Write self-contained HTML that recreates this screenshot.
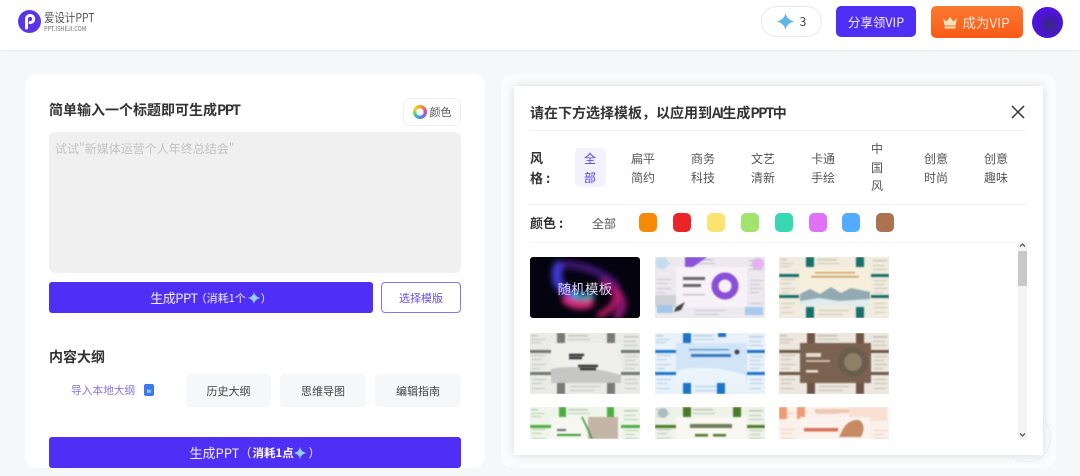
<!DOCTYPE html>
<html lang="zh"><head><meta charset="utf-8"><style>
*{box-sizing:border-box;margin:0;padding:0}
html,body{width:1080px;height:476px;overflow:hidden;background:#f5f7f9;font-family:"Noto Sans CJK SC","Liberation Sans",sans-serif;color:#333}
.a{position:absolute;white-space:nowrap}
.c{display:flex;align-items:center;justify-content:center}
.t{position:absolute;overflow:hidden;width:110px;height:61px}
.t svg{display:block;filter:blur(.7px)}
.t use{opacity:.6}
.sw{position:absolute;top:213px;width:18px;height:19px;border-radius:5px}
.st{position:absolute;font-size:12px;line-height:19px;color:#555;text-align:left;width:24px;white-space:normal}
.g{top:374px;height:33px;background:#f5f7f9;border-radius:5px;font-size:11px;color:#444}
.n{letter-spacing:-1.600px}
</style></head><body>
<svg width="0" height="0" style="position:absolute"><defs>
<g id="d"><rect x="1" y="2" width="7" height="1.500"/><rect x="1" y="6" width="14" height="1"/><rect x="1" y="9" width="10" height="1"/><rect x="38" y="2" width="20" height="1.500"/><rect x="38" y="6" width="22" height="1"/><rect x="94" y="3" width="14" height="1.500"/><rect x="94" y="8" width="12" height="1"/><rect x="94" y="12" width="14" height="1"/><rect x="2" y="22" width="14" height="1"/><rect x="2" y="26" width="10" height="1"/><rect x="2" y="31" width="14" height="1"/><rect x="2" y="35" width="8" height="1"/><rect x="95" y="23" width="13" height="1"/><rect x="95" y="27" width="10" height="1"/><rect x="95" y="31" width="13" height="1"/><rect x="95" y="35" width="9" height="1"/><rect x="2" y="46" width="14" height="1"/><rect x="2" y="50" width="10" height="1"/><rect x="2" y="55" width="13" height="1"/><rect x="40" y="53" width="30" height="1"/><rect x="40" y="57" width="24" height="1"/><rect x="95" y="46" width="12" height="1"/><rect x="95" y="50" width="13" height="1"/><rect x="95" y="55" width="11" height="1"/></g>
</defs></svg>
<div class="a" style="left:0;top:0;width:1080px;height:50px;background:#fff;box-shadow:0 1px 3px #e9ebef"></div>
<svg class="a" style="left:18px;top:10px" width="23" height="23" viewBox="0 0 23 23"><circle cx="11.500" cy="11.500" r="11.500" fill="#5b34ea"/><path d="M8.500 18V9a3.600 3.600 0 1 1 3.600 3.600" fill="none" stroke="#fff" stroke-width="3" stroke-linecap="round"/></svg>
<div class="a" style="left:44px;top:11px;font-size:12px;line-height:14px;color:#555;transform-origin:0 0;transform:scaleX(.87)">爱设计PPT</div>
<div class="a" style="left:44px;top:24px;font-size:6.500px;line-height:9px;color:#888;font-weight:500;transform-origin:0 0;transform:scaleX(.85)">PPT.ISHEJI.COM</div>

<div class="a c" style="left:761px;top:6px;width:61px;height:31px;border:1px solid #e8e8ee;border-radius:16px;font-size:12px;color:#444;background:#fff"><svg width="17" height="17" viewBox="0 0 16 16" style="margin-right:6px"><path d="M8 0Q9 6 16 8Q9 10 8 16Q7 10 0 8Q7 6 8 0Z" fill="#62b5e8"/></svg>3</div>
<div class="a c" style="left:836px;top:6px;width:80px;height:31px;background:#4f2ff5;border-radius:5px;color:#f2efff;font-size:12.500px">分享领VIP</div>
<div class="a c" style="left:931px;top:6px;width:92px;height:32px;background:linear-gradient(#fb7a32,#fb5a14);border-radius:5px;color:#ffe9dc;font-size:13.500px"><svg width="16" height="13" viewBox="0 0 16 13" style="margin-right:4px;margin-left:-2px"><path d="M1 2L4.500 5.500L8 1L11.500 5.500L15 2L13.500 9.500H2.500Z M2.500 10.500H13.500V12.500H2.500Z" fill="#ffe2b8"/></svg>成为VIP</div>
<svg class="a" style="left:1032px;top:7px" width="31" height="31" viewBox="0 0 31 31"><defs><radialGradient id="av" cx=".58" cy=".58" r=".5"><stop offset="0" stop-color="#3d2a70"/><stop offset=".4" stop-color="#3f1cb0"/><stop offset="1" stop-color="#5212e0"/></radialGradient></defs><circle cx="15.500" cy="15.500" r="15.500" fill="url(#av)"/></svg>

<!-- left card -->
<div class="a" style="left:25px;top:74px;width:460px;height:394px;background:#fff;border-radius:12px"></div>
<div class="a" style="left:49px;top:100px;font-size:14px;line-height:20px;font-weight:700;color:#333">简单输入一个标题即可生成<span class="n">PPT</span></div>
<div class="a c" style="left:403px;top:98px;width:58px;height:28px;border:1px solid #f0f0f3;border-radius:7px;font-size:11px;color:#555"><span style="width:14px;height:14px;border-radius:50%;margin-right:3px;background:radial-gradient(circle,#fff 0 36%,transparent 38%),conic-gradient(#f5a623,#f2557a,#9a55e8,#4a90e8,#3ccf90,#f5d623,#f5a623)"></span>颜色</div>
<div class="a" style="left:49px;top:132px;width:412px;height:141px;background:#f0f0f0;border-radius:6px"></div>
<div class="a" style="left:55px;top:140px;font-size:12px;line-height:17px;color:#c4c4c4">试试"新媒体运营个人年终总结会"</div>
<div class="a c" style="left:49px;top:282px;width:324px;height:31px;background:#4f2ff5;border-radius:3px;color:#f2efff;font-size:11px"><span style="font-size:13px;letter-spacing:-.5px">生成PPT</span><span style="margin-left:-2px">（消耗1个</span><svg width="12" height="12" viewBox="0 0 16 16" style="margin:0 1px 0 2px"><path d="M8 0Q9 6 16 8Q9 10 8 16Q7 10 0 8Q7 6 8 0Z" fill="#8fd0f5"/></svg>）</div>
<div class="a c" style="left:381px;top:282px;width:80px;height:31px;border:1px solid #8a76ea;border-radius:4px;color:#6a50e0;font-size:11px">选择模版</div>
<div class="a" style="left:49px;top:347px;font-size:14px;line-height:20px;font-weight:700;color:#333">内容大纲</div>
<div class="a" style="left:71px;top:383px;font-size:10.700px;line-height:16px;color:#8a72e6">导入本地大纲</div>
<div class="a c" style="left:144px;top:384px;width:10px;height:12px;background:#3a78f0;border-radius:2px;color:#fff;font-size:6px">w</div>
<div class="a c g" style="left:186px;width:85px">历史大纲</div>
<div class="a c g" style="left:280px;width:86px">思维导图</div>
<div class="a c g" style="left:375px;width:86px">编辑指南</div>
<div class="a c" style="left:49px;top:437px;width:412px;height:31px;background:#4f2ff5;border-radius:3px;color:#f2efff;font-size:12px"><span style="font-size:13px">生成PPT</span>（<b style="font-size:11.500px;color:#fff;margin-left:1px">消耗1点</b><svg width="12" height="12" viewBox="0 0 16 16"><path d="M8 0Q9 6 16 8Q9 10 8 16Q7 10 0 8Q7 6 8 0Z" fill="#8fd0f5"/></svg>&nbsp;）</div>

<!-- right -->
<div class="a" style="left:501px;top:74px;width:555px;height:394px;background:#fbfcfd;border-radius:12px"></div>
<div class="a" style="left:1003px;top:414px;width:48px;height:48px;border:1px solid #f0f1f3;border-radius:50%"></div>
<div class="a" style="left:514px;top:86px;width:529px;height:369px;background:#fff;box-shadow:0 0 10px rgba(0,0,0,.14)"></div>
<div class="a" style="left:530px;top:103px;font-size:14px;line-height:20px;font-weight:700;color:#333">请在下方选择模板，以应用到<span class="n">AI</span>生成<span class="n">PPT</span>中</div>
<svg class="a" style="left:1011px;top:105px" width="14" height="14" viewBox="0 0 14 14"><path d="M1 1L13 13M13 1L1 13" stroke="#333" stroke-width="1.500"/></svg>
<div class="a" style="left:530px;top:130px;width:497px;height:1px;background:#f1f1f3"></div>
<div class="a" style="left:530px;top:148px;width:28px;font-size:13px;line-height:20px;font-weight:700;white-space:normal;color:#333">风<br>格 :</div>
<div class="a" style="left:575px;top:148px;width:31px;height:39px;background:#f4f1fe;border-radius:5px"></div>
<div class="st" style="left:584px;top:148.500px;width:12px;color:#5a3ae6">全部</div>
<div class="st" style="left:631px;top:148.500px">扁平简约</div>
<div class="st" style="left:691px;top:148.500px">商务科技</div>
<div class="st" style="left:751px;top:148.500px">文艺清新</div>
<div class="st" style="left:811px;top:148.500px">卡通手绘</div>
<div class="st" style="left:871px;top:140px;width:12px;line-height:18.500px">中国风</div>
<div class="st" style="left:924px;top:148.500px">创意时尚</div>
<div class="st" style="left:984px;top:148.500px">创意趣味</div>
<div class="a" style="left:530px;top:204px;width:497px;height:1px;background:#f1f1f3"></div>
<div class="a" style="left:530px;top:213px;font-size:13px;line-height:20px;font-weight:700;color:#333">颜色 :</div>
<div class="a" style="left:592px;top:214px;font-size:12px;line-height:19px;color:#555">全部</div>
<div class="sw" style="left:639px;background:#f58a07"></div>
<div class="sw" style="left:673px;background:#e92528"></div>
<div class="sw" style="left:707px;background:#fce26f"></div>
<div class="sw" style="left:741px;background:#a2e36e"></div>
<div class="sw" style="left:775px;background:#38d8b2"></div>
<div class="sw" style="left:809px;background:#e070f5"></div>
<div class="sw" style="left:842px;background:#52abfd"></div>
<div class="sw" style="left:876px;background:#ad7350"></div>
<div class="a" style="left:530px;top:242px;width:497px;height:1px;background:#f6f6f7"></div>

<!-- scrollbar -->
<div class="a" style="left:1018px;top:241px;width:9px;height:199px;background:#f3f3f3"></div>
<div class="a" style="left:1018px;top:251px;width:9px;height:35px;background:#c8c8c8"></div>
<svg class="a" style="left:1019px;top:242px" width="7" height="6" viewBox="0 0 7 6"><path d="M1 4.500L3.500 2L6 4.500" fill="none" stroke="#555" stroke-width="1.300"/></svg>
<svg class="a" style="left:1019px;top:432px" width="7" height="6" viewBox="0 0 7 6"><path d="M1 1.500L3.500 4L6 1.500" fill="none" stroke="#555" stroke-width="1.300"/></svg>

<!-- thumbs -->
<div class="t" style="left:530px;top:257px;border-radius:3px;background:#05030f">
<svg width="110" height="61" viewBox="0 0 110 61" style="filter:none"><defs><filter id="b1" x="-20%" y="-20%" width="140%" height="140%"><feGaussianBlur stdDeviation="3"/></filter></defs><g filter="url(#b1)" fill="none" stroke-linecap="round"><path d="M28 8C44 6 70 12 86 28" stroke="#3a1470" stroke-width="8"/><path d="M28 10C24 24 30 34 46 38" stroke="#3f38d8" stroke-width="10"/><path d="M36 43C44 49 54 49 60 46" stroke="#e02a7c" stroke-width="8"/><path d="M44 38C50 41 56 41 62 38" stroke="#18b8d8" stroke-width="5"/><path d="M74 26C92 36 96 46 88 58" stroke="#8a1470" stroke-width="9"/><path d="M70 58C82 52 88 44 86 34" stroke="#c01a6a" stroke-width="6"/></g></svg>
<div class="a c" style="left:0;top:0;width:110px;height:61px;color:#e4d8ee;font-size:13.500px;letter-spacing:.2px">随机模板</div></div>

<div class="t" style="left:655px;top:257px;background:#ece9ef">
<svg width="110" height="61" viewBox="0 0 110 61"><use href="#d" fill="#a9a9b8"/><circle cx="7" cy="6" r="6" fill="#c4dcf2"/><path d="M30 0H52L38 10H30Z" fill="#8a55d8"/><circle cx="103" cy="7" r="6" fill="#e4b4f0"/><rect x="0" y="38" width="22" height="12" fill="#d0d0d8"/><rect x="2" y="48" width="16" height="8" fill="#a4c6ea"/><rect x="90" y="50" width="18" height="8" fill="#a8c8ee"/><rect x="21" y="10" width="71" height="40" fill="#f6f2f7"/><circle cx="70" cy="29" r="10" fill="none" stroke="#8a4ed8" stroke-width="7"/><rect x="28" y="20" width="22" height="3" fill="#666"/><rect x="28" y="27" width="18" height="3" fill="#666"/><rect x="28" y="37" width="22" height="1.500" fill="#c4c4c4"/><path d="M21 50l9-5-4 8-7 2z" fill="#444"/></svg></div>

<div class="t" style="left:779px;top:257px;background:#f1ecdf">
<svg width="110" height="61" viewBox="0 0 110 61"><use href="#d" fill="#b5b09a"/><rect x="27" width="8" height="10" fill="#17706a"/><rect x="77" width="8" height="10" fill="#17706a"/><rect x="27" y="50" width="8" height="11" fill="#17706a"/><rect x="77" y="50" width="8" height="11" fill="#17706a"/><rect y="17" width="110" height="3" fill="#17706a"/><rect y="38" width="110" height="3" fill="#17706a"/><rect x="20" y="10" width="72" height="39" fill="#f6efdc"/><rect x="36" y="15" width="40" height="1.500" fill="#d0a060"/><rect x="32" y="19" width="48" height="1.500" fill="#c89858"/><path d="M21 37L31 32L41 37L52 30L62 36L72 31L91 35V49H21Z" fill="#93aab2"/><path d="M21 44L40 41L60 44L91 42V49H21Z" fill="#e0ecee"/></svg></div>

<div class="t" style="left:530px;top:333px;background:#eaeae6">
<svg width="110" height="61" viewBox="0 0 110 61"><use href="#d" fill="#a8a8a2"/><rect x="27" width="8" height="10" fill="#767b74"/><rect x="77" width="8" height="10" fill="#767b74"/><rect x="27" y="50" width="8" height="11" fill="#767b74"/><rect x="77" y="50" width="8" height="11" fill="#767b74"/><rect y="17" width="110" height="3" fill="#6e756d"/><rect y="39" width="110" height="3" fill="#6e756d"/><rect x="21" y="10" width="70" height="40" fill="#efefec"/><path d="M21 36Q50 30 91 42V50H21Z" fill="#c6c6c4"/><path d="M39 22h15M39 25h13M48 33h20M50 36h16" stroke="#333" stroke-width="2.400"/></svg></div>

<div class="t" style="left:655px;top:333px;background:#e9f2fa">
<svg width="110" height="61" viewBox="0 0 110 61"><use href="#d" fill="#8ab4d8"/><rect x="28" width="8" height="10" fill="#1b74c8"/><rect x="28" y="50" width="8" height="11" fill="#1b74c8"/><rect x="62" y="50" width="8" height="11" fill="#1b74c8"/><rect x="63" y="0" width="8" height="4" fill="#1b74c8"/><rect y="17" width="110" height="3" fill="#1b74c8"/><rect y="39" width="110" height="3" fill="#1b74c8"/><rect x="21" y="10" width="71" height="40" fill="#d2e5f6"/><rect x="34" y="16" width="40" height="1.500" fill="#5a9ad8"/><rect x="36" y="21" width="40" height="3" fill="#3a78c0"/><path d="M21 38Q50 30 91 42V50H21Z" fill="#ecf4fb"/><circle cx="82" cy="19" r="2.500" fill="#445"/></svg></div>

<div class="t" style="left:779px;top:333px;background:#ece8df">
<svg width="110" height="61" viewBox="0 0 110 61"><use href="#d" fill="#a89c8c"/><rect x="28" width="8" height="10" fill="#6e5544"/><rect x="77" width="8" height="10" fill="#6e5544"/><rect x="28" y="50" width="8" height="11" fill="#6e5544"/><rect x="77" y="50" width="8" height="11" fill="#6e5544"/><rect y="17" width="110" height="3" fill="#6e5544"/><rect y="39" width="110" height="3" fill="#6e5544"/><rect x="21" y="10" width="71" height="40" fill="#7a6150"/><circle cx="74" cy="29" r="15" fill="#6a5d4b"/><circle cx="74" cy="29" r="9" fill="#8d7f68"/><rect x="27" y="20" width="15" height="4" fill="#e8dece"/><rect x="27" y="27" width="24" height="2" fill="#cdbda8"/><rect x="27" y="37" width="12" height="2.500" fill="#efe6d8"/></svg></div>

<div class="t" style="left:530px;top:407px;height:32px;background:#f0f5ec">
<svg width="110" height="61" viewBox="0 0 110 61"><use href="#d" fill="#8cb884"/><rect x="29" width="7" height="10" fill="#4cac40"/><rect x="77" width="7" height="10" fill="#4cac40"/><rect y="18" width="110" height="3" fill="#4cac40"/><rect x="21" y="10" width="70" height="40" fill="#f7f7f2"/><rect x="58" y="10" width="30" height="22" fill="#c4b6a6"/><path d="M52 10Q58 22 62 32" stroke="#3a9a30" stroke-width="1.600" fill="none"/><rect x="27" y="22" width="9" height="2" fill="#666"/><rect x="27" y="27" width="24" height="2" fill="#3a9a30"/></svg></div>

<div class="t" style="left:655px;top:407px;height:32px;background:#eff2e9">
<svg width="110" height="61" viewBox="0 0 110 61"><use href="#d" fill="#9aa88c"/><rect x="28" width="8" height="10" fill="#4a7a28"/><rect x="78" width="8" height="10" fill="#4a7a28"/><rect y="18" width="110" height="3" fill="#4a7a28"/><circle cx="8" cy="6" r="5" fill="#a8bcc4"/><rect x="21" y="10" width="71" height="40" fill="#f8f7f1"/><rect x="35" y="17" width="42" height="4" fill="#6e7c5c"/><rect x="40" y="27" width="13" height="2.500" fill="#4a7a28"/><rect x="58" y="27" width="13" height="2.500" fill="#4a7a28"/></svg></div>

<div class="t" style="left:779px;top:407px;height:32px;background:#fbf0ea">
<svg width="110" height="61" viewBox="0 0 110 61"><use href="#d" fill="#e8b8a0"/><rect x="0" width="8" height="12" fill="#ef9a70"/><rect x="18" width="8" height="12" fill="#ef9a70"/><rect x="70" width="38" height="14" fill="#f8e0d2"/><rect x="36" y="2" width="34" height="4" fill="#f0c8b4"/><rect x="21" y="10" width="70" height="40" fill="#fbf3ee"/><rect x="25" y="21" width="34" height="3.500" fill="#d87058"/><path d="M62 26Q68 12 80 13Q88 18 82 30H60Z" fill="#c88a64"/></svg></div>
</body></html>
